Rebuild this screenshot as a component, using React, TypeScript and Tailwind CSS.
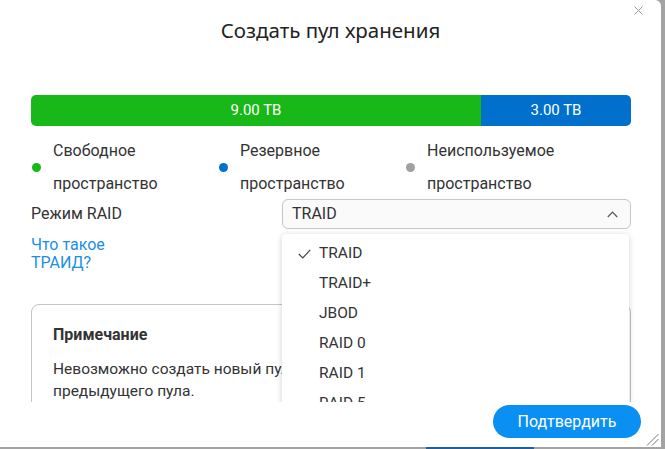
const legend = [
  { color: "bg-[#17b817]", top: "Свободное", bottom: "пространство" },
  { color: "bg-[#0070cc]", top: "Резервное", bottom: "пространство" },
  { color: "bg-[#a0a0a0]", top: "Неиспользуемое", bottom: "пространство" },
];

const raidModes = ["TRAID", "TRAID+", "JBOD", "RAID 0", "RAID 1", "RAID 5", "RAID 6", "RAID 10"];

export default function App() {
  return (
    <div className="w-[665px] h-[449px] flex flex-col bg-[#a3a3a3] overflow-hidden font-['Roboto',sans-serif] text-[#333]">
      <div className="flex h-[447px]">
        {/* dialog */}
        <div className="relative w-[661px] h-full bg-white rounded-tr-md flex flex-col">
          <button className="absolute top-[4px] right-[17px] w-[12px] h-[12px] flex items-center justify-center text-[#9a9a9a]">
            <svg width="9" height="9" viewBox="0 0 9 9" fill="none" stroke="currentColor" strokeWidth="1">
              <path d="M0.5 0.5l8 8M8.5 0.5l-8 8" />
            </svg>
          </button>

          <div className="h-[62px] flex items-center justify-center pb-[2px]">
            <h1 className="text-[20.5px] font-['Noto_Sans',sans-serif] text-[#222]">Создать пул хранения</h1>
          </div>

          {/* scrollable body */}
          <div className="relative h-[340px] overflow-hidden pl-[31px] pr-[30px] pt-[33px]">
            <div className="flex h-[31px] rounded-[5px] overflow-hidden text-white text-[15px]">
              <div className="w-[450px] bg-[#17b817] flex items-center justify-center">9.00 TB</div>
              <div className="flex-1 bg-[#0070cc] flex items-center justify-center">3.00 TB</div>
            </div>

            <div className="mt-[8px] flex text-[16px] leading-[33px]">
              {legend.map((item) => (
                <div key={item.top} className="w-[187px] flex items-center">
                  <span className={`w-[9px] h-[9px] rounded-full ${item.color} ml-[1px] mr-[12px]`} />
                  <div>
                    <div>{item.top}</div>
                    <div>{item.bottom}</div>
                  </div>
                </div>
              ))}
            </div>

            <div className="-mt-[1px] flex items-center h-[30px] text-[16px]">
              <div className="w-[251px]">Режим RAID</div>
              <div className="flex-1 h-full flex items-center justify-between pl-[9px] pr-[12px] border border-[#c6c6c6] rounded-[6px] bg-[#fafafa]">
                <span>TRAID</span>
                <svg width="11" height="7" viewBox="0 0 11 7" fill="none" stroke="#555" strokeWidth="1.2">
                  <path d="M0.8 6L5.5 1.2 10.2 6" />
                </svg>
              </div>
            </div>

            <a className="mt-[7px] block w-[90px] text-[16px] leading-[18px] text-[#1a8fe6]">Что такое ТРАИД?</a>

            <div className="mt-[32px] border border-[#c4c4c4] rounded-[8px] pt-[19px] px-[21px] pb-[20px]">
              <div className="text-[16px] font-bold leading-[22px] text-[#333]">Примечание</div>
              <p className="mt-[12px] text-[15.5px] leading-[22px]">
                Невозможно создать новый пул до завершения создания
                <br />
                предыдущего пула.
              </p>
            </div>

            {/* open select menu */}
            <div className="absolute left-[282px] top-[172px] w-[347px] bg-white rounded-[4px] shadow-[0_1px_6px_rgba(0,0,0,0.18)] py-[5px] text-[15.5px]">
              {raidModes.map((mode, i) => (
                <div key={mode} className="h-[30px] flex items-center">
                  <span className="w-[37px] flex justify-end pr-[8px]">
                    {i === 0 && (
                      <svg width="13" height="10" viewBox="0 0 13 10" fill="none" stroke="#444" strokeWidth="1.2">
                        <path d="M0.8 5l4 4L12.2 0.8" />
                      </svg>
                    )}
                  </span>
                  <span>{mode}</span>
                </div>
              ))}
            </div>
          </div>

          {/* footer */}
          <div className="flex-1 flex items-start justify-end pr-[20px] pt-[3px]">
            <button className="h-[33px] w-[148px] rounded-full bg-[#0a90f2] text-white text-[16px]">Подтвердить</button>
          </div>

          <svg className="absolute right-[2px] bottom-[1px]" width="13" height="13" viewBox="0 0 13 13" fill="none" stroke="#777" strokeWidth="1">
            <path d="M1 12.5L12.5 1M6 12.5L12.5 6" />
          </svg>
        </div>
        <div className="flex-1" />
      </div>
      <div className="flex h-[2px]">
        <div className="w-[426px]" />
        <div className="w-[108px] bg-[#1e5f9c]" />
      </div>
    </div>
  );
}
